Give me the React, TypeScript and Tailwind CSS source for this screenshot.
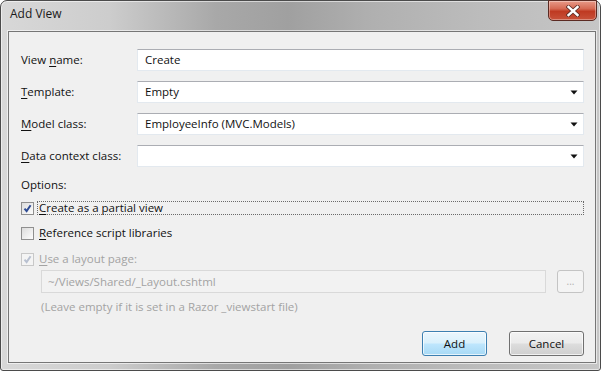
import React from "react";

const font = { fontFamily: '"Open Sans", "Noto Sans", "Liberation Sans", sans-serif' };

function U({ c }: { c: string }) {
  return <span className="underline underline-offset-2 decoration-1">{c}</span>;
}

function Arrow() {
  return (
    <svg width="8" height="5" viewBox="0 0 8 5" className="shrink-0">
      <path d="M0.5 0.5 H7.5 L4 4.5 Z" fill="#111" />
    </svg>
  );
}

function Field({ children, arrow }: { children?: React.ReactNode; arrow?: boolean }) {
  return (
    <div className="flex-1 h-full flex items-center bg-white border border-[#e3e9ef] border-t-[#abadb3] pl-[7px] pr-[5px] text-[11.5px] text-[#111]">
      <span className="flex-1 leading-none">{children}</span>
      {arrow && <Arrow />}
    </div>
  );
}

function Row({ label, children, arrow }: { label: React.ReactNode; children?: React.ReactNode; arrow?: boolean }) {
  return (
    <div className="flex items-center h-[22px]">
      <div className="w-[116px] text-[11.5px] text-[#111] leading-none">{label}</div>
      <Field arrow={arrow}>{children}</Field>
    </div>
  );
}

function Check({ checked, disabled }: { checked?: boolean; disabled?: boolean }) {
  return (
    <div
      className={
        "w-[13px] h-[13px] border flex items-center justify-center shrink-0 " +
        (disabled
          ? "border-[#c8c8c8] bg-[#f4f4f4]"
          : "border-[#8f8f8f] bg-[linear-gradient(135deg,#dcdcdc,#fdfdfd)]")
      }
    >
      {checked && (
        <svg width="9" height="9" viewBox="0 0 9 9">
          <path
            d="M1.5 4.6 L3.6 7 L7.6 1.2"
            fill="none"
            stroke={disabled ? "#b8c0d0" : "#2f4c94"}
            strokeWidth="2"
          />
        </svg>
      )}
    </div>
  );
}

export default function App() {
  return (
    <div className="w-[605px] h-[373px] bg-white overflow-hidden" style={font}>
      <div className="relative w-[601px] h-[371px] rounded-t-[7px] rounded-b-[3px] border border-[#4b4b4b] bg-[linear-gradient(90deg,#d8d8d8_0%,#cdcdcd_18%,#a8a8a8_36%,#a0a0a0_48%,#b0b0b0_62%,#bcbcbc_80%,#c6c6c6_100%)] flex flex-col shadow-[inset_0_0_0_1px_rgba(255,255,255,0.55)]">
        {/* title bar */}
        <div className="h-[30px] flex items-center pl-[9px] text-[12px] text-[#1a1a1a]">
          <span className="-mt-[4px]">Add View</span>
        </div>
        {/* close button */}
        <div className="absolute top-[-1px] right-[3px] w-[49px] h-[21px] rounded-b-[5px] border border-[#5b2a22] bg-[linear-gradient(180deg,#e89a88_0%,#d66a54_40%,#bf3a22_55%,#c8523a_100%)] flex items-center justify-center shadow-[inset_0_0_0_1px_rgba(255,255,255,0.35)]">
          <svg width="14" height="12" viewBox="0 0 14 12">
            <path d="M2.5 2 L11.5 10 M11.5 2 L2.5 10" stroke="#5a2b25" strokeWidth="4" strokeLinecap="square" />
            <path d="M2.5 2 L11.5 10 M11.5 2 L2.5 10" stroke="#ffffff" strokeWidth="2.4" strokeLinecap="square" />
          </svg>
        </div>
        {/* client area */}
        <div className="flex-1 ml-[7px] mr-[4px] mb-[7px] border border-[#767676] bg-[#f0f0f0] flex flex-col pt-[17px] pl-[12px] pr-[11px] pb-[5px] shadow-[0_0_0_1px_rgba(255,255,255,0.6)]">
          <div className="flex flex-col gap-[10px]">
            <Row label={<>View <U c="n" />ame:</>}>Create</Row>
            <Row label={<><U c="T" />emplate:</>} arrow>Empty</Row>
            <Row label={<><U c="M" />odel class:</>} arrow>EmployeeInfo (MVC.Models)</Row>
            <Row label={<><U c="D" />ata context class:</>} arrow />
          </div>
          <div className="mt-[10px] h-[16px] flex items-center text-[11.5px] text-[#111]">Options:</div>
          <div className="mt-[7px] h-[16px] flex items-center">
            <Check checked />
            <div className="ml-[3px] flex-1 h-[14px] flex items-center pl-[1px] border border-dotted border-[#6a6a6a] text-[11.5px] text-[#111]">
              <span><U c="C" />reate as a partial view</span>
            </div>
          </div>
          <div className="mt-[9px] h-[16px] flex items-center">
            <Check />
            <span className="ml-[5px] text-[11.5px] text-[#111]"><U c="R" />eference script libraries</span>
          </div>
          <div className="mt-[10px] h-[16px] flex items-center">
            <Check checked disabled />
            <span className="ml-[5px] text-[11.5px] text-[#a3a3a3]"><U c="U" />se a layout page:</span>
          </div>
          <div className="mt-[3px] h-[23px] flex items-center pl-[20px] gap-[11px]">
            <div className="flex-1 h-full flex items-center border border-[#d9d9d9] bg-[#f2f2f2] pl-[6px] text-[11.5px] text-[#a3a3a3]">
              ~/Views/Shared/_Layout.cshtml
            </div>
            <div className="w-[27px] h-full rounded-[3px] border border-[#c4c4c4] bg-[#f4f4f4] flex items-center justify-center text-[10px] text-[#b0b0b0] leading-none pb-[2px]">
              ...
            </div>
          </div>
          <div className="mt-[6px] h-[16px] flex items-center pl-[20px] text-[11.5px] text-[#a3a3a3]">
            (Leave empty if it is set in a Razor _viewstart file)
          </div>
          <div className="mt-[16px] flex justify-end gap-[22px]">
            <div className="w-[65px] h-[25px] rounded-[3px] border border-[#3c7fb1] bg-[linear-gradient(180deg,#eaf6fd_0%,#d9f0fc_48%,#bee6fd_52%,#a7d9f5_100%)] shadow-[inset_0_0_0_1px_rgba(255,255,255,0.7)] flex items-center justify-center text-[11.5px] text-[#111]">
              Add
            </div>
            <div className="w-[75px] h-[25px] rounded-[3px] border border-[#707070] bg-[linear-gradient(180deg,#f2f2f2_0%,#ebebeb_48%,#dddddd_52%,#cfcfcf_100%)] shadow-[inset_0_0_0_1px_rgba(255,255,255,0.7)] flex items-center justify-center text-[11.5px] text-[#111]">
              Cancel
            </div>
          </div>
        </div>
      </div>
    </div>
  );
}
